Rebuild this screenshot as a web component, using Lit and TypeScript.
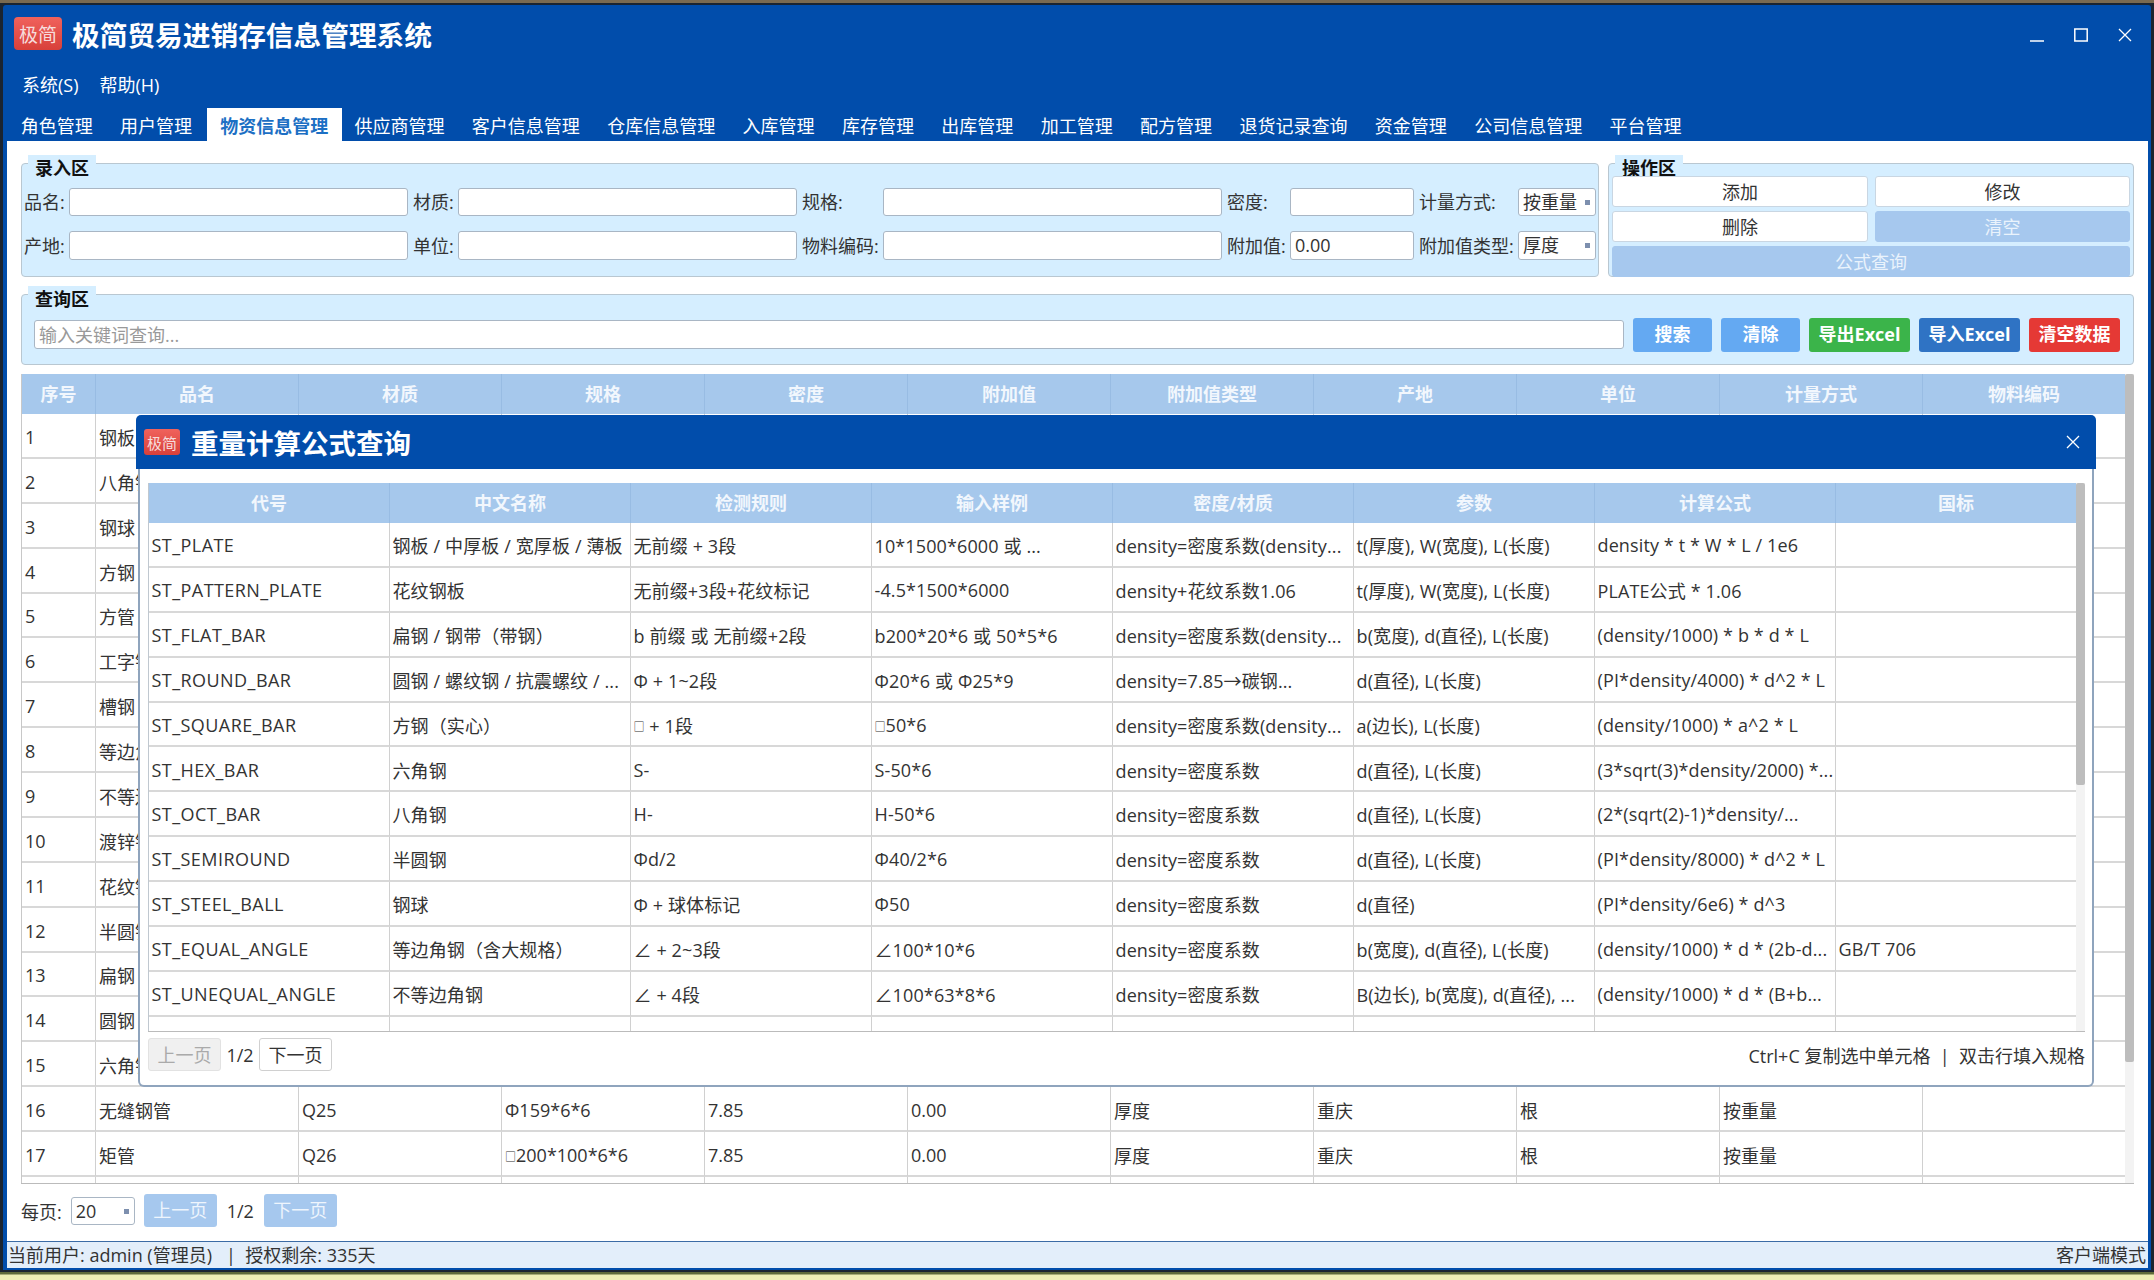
import { LitElement, html, css } from "lit";
import { customElement } from "lit/decorators.js";

const TABS = ["角色管理","用户管理","物资信息管理","供应商管理","客户信息管理","仓库信息管理","入库管理","库存管理","出库管理","加工管理","配方管理","退货记录查询","资金管理","公司信息管理","平台管理"];
const HEAD = ["序号","品名","材质","规格","密度","附加值","附加值类型","产地","单位","计量方式","物料编码"];
const NAMES = ["钢板","八角钢","钢球","方钢","方管","工字钢","槽钢","等边角钢","不等边角钢","渡锌钢管","花纹钢板","半圆钢","扁钢","圆钢","六角钢","无缝钢管","矩管"];
const RHEAD = ["代号","中文名称","检测规则","输入样例","密度/材质","参数","计算公式","国标"];
const D = "density=密度系数";
const RULES = [
["ST_PLATE","钢板 / 中厚板 / 宽厚板 / 薄板","无前缀 + 3段","10*1500*6000 或 ...","density=密度系数(density...","t(厚度), W(宽度), L(长度)","density * t * W * L / 1e6",""],
["ST_PATTERN_PLATE","花纹钢板","无前缀+3段+花纹标记","-4.5*1500*6000","density+花纹系数1.06","t(厚度), W(宽度), L(长度)","PLATE公式 * 1.06",""],
["ST_FLAT_BAR","扁钢 / 钢带（带钢）","b 前缀 或 无前缀+2段","b200*20*6 或 50*5*6","density=密度系数(density...","b(宽度), d(直径), L(长度)","(density/1000) * b * d * L",""],
["ST_ROUND_BAR","圆钢 / 螺纹钢 / 抗震螺纹 / ...","Φ + 1~2段","Φ20*6 或 Φ25*9","density=7.85→碳钢...","d(直径), L(长度)","(PI*density/4000) * d^2 * L",""],
["ST_SQUARE_BAR","方钢（实心）","□ + 1段","□50*6","density=密度系数(density...","a(边长), L(长度)","(density/1000) * a^2 * L",""],
["ST_HEX_BAR","六角钢","S-","S-50*6",D,"d(直径), L(长度)","(3*sqrt(3)*density/2000) *...",""],
["ST_OCT_BAR","八角钢","H-","H-50*6",D,"d(直径), L(长度)","(2*(sqrt(2)-1)*density/...",""],
["ST_SEMIROUND","半圆钢","Φd/2","Φ40/2*6",D,"d(直径), L(长度)","(PI*density/8000) * d^2 * L",""],
["ST_STEEL_BALL","钢球","Φ + 球体标记","Φ50",D,"d(直径)","(PI*density/6e6) * d^3",""],
["ST_EQUAL_ANGLE","等边角钢（含大规格）","∠ + 2~3段","∠100*10*6",D,"b(宽度), d(直径), L(长度)","(density/1000) * d * (2b-d...","GB/T 706"],
["ST_UNEQUAL_ANGLE","不等边角钢","∠ + 4段","∠100*63*8*6",D,"B(边长), b(宽度), d(直径), ...","(density/1000) * d * (B+b...",""],
["ST_ROUND_TUBE","无缝钢管 / 焊接钢管 / 圆管","Φ + 2段","Φ159*6*6",D,"D(外径), t(壁厚), L(长度)","(PI*density/1000) * t * (D-t) * L",""],
];

const FONT = css`"Open Sans", "Noto Sans CJK SC", sans-serif`;

@customElement("app-root")
export class AppRoot extends LitElement {
  static styles = css`
    :host { display: block; width: 2154px; height: 1280px; overflow: hidden; position: relative;
      font-family: ${FONT}; font-size: 18px; color: #333;
      background: linear-gradient(#7a6a50 0 3px, #1b2430 3px 1272px, #5f6a3a 1272px 1274px, #eeeeb4 1275px); }
    * { box-sizing: border-box; }
    .window { margin: 5px 3px 0; height: 1265px; background: #014dab; padding: 0 3px 2px 4px;
      display: flex; flex-direction: column; border-radius: 3px 3px 0 0; }
    .titlebar { height: 61px; display: flex; align-items: flex-start; color: #fff; }
    .logo { background: linear-gradient(#f0625c, #d8403a); border-radius: 4px; color: #f6dcdc;
      display: flex; align-items: center; justify-content: center; }
    .logo.big { width: 48px; height: 33px; font-size: 19px; margin: 12px 10px 0 7px; }
    .apptitle { font-size: 27.7px; font-weight: 700; line-height: 44px; margin-top: 8px; white-space: nowrap; }
    .controls { margin-left: auto; display: flex; gap: 30px; padding: 23px 16px 0 0; align-items: flex-start; }
    .controls svg { display: block; }
    .menu { height: 42px; display: flex; gap: 21px; padding: 2px 0 0 15px; color: #fff; line-height: 34px; }
    .tabs { height: 33px; display: flex; color: #fff; }
    .tab { padding: 0 13.7px; display: flex; align-items: center; white-space: nowrap; }
    .tab.on { background: #fff; color: #1c6fc4; font-weight: 700; width: 135px; justify-content: center; margin-left: 1px; margin-right: -1px; }
    .content { flex: 1; background: #fff; padding: 22px 14px 0; display: flex; flex-direction: column; }
    .toprow { display: flex; gap: 9px; height: 114px; }
    .group { position: relative; background: #d5eeff; border: 1px solid #b9c7d1; border-radius: 4px; }
    .legend { position: absolute; left: 6px; top: -9px; width: 68px; height: 27px; background: #d5eeff;
      font-weight: 700; color: #111; line-height: 26px; text-align: center; }
    .entry { width: 1578px; padding: 24px 0 0 2px; display: grid;
      grid-template-columns: 45px 344px 45px 344px 81px 344px 63px 129px 99px 78px;
      grid-template-rows: 28px 29px; row-gap: 15px; align-items: center; }
    .lab { white-space: nowrap; line-height: 28px; }
    .inp { height: 100%; width: calc(100% - 5px); background: #fff; border: 1px solid #a9b6c4; border-radius: 3px;
      padding: 0 4px; line-height: 27px; white-space: nowrap; }
    .sel { position: relative; width: 100%; }
    .sel i { position: absolute; right: 5px; top: 11px; width: 5px; height: 5px; background: #7d8fae; }
    .ops { flex: 1; padding: 12px 3px 0; display: grid; grid-template-columns: 256px 255px; column-gap: 7px;
      grid-template-rows: 31px 31px 31px; row-gap: 4px; }
    .ops .legend { z-index: 1; height: 21px; }
    .opb { background: #fff; border: 1px solid #c9d6e2; border-radius: 3px; text-align: center; line-height: 30px; position: relative; z-index: 2; }
    .opb.blue { background: #a6c8ee; border-color: #a6c8ee; color: #eaf3fc; }
    .wide { grid-column: 1 / 3; }
    .query { margin-top: 17px; height: 71px; padding: 23px 13px 0 12px; display: flex; gap: 9px; align-items: flex-start; }
    .query .inp { flex: 1; width: auto; height: 29px; margin-top: 2px; color: #999; line-height: 28px; }
    .qb { height: 34px; border-radius: 3px; color: #fff; font-weight: 700; text-align: center; line-height: 33px; white-space: nowrap; }
    .b1 { width: 79px; background: #64a9f2; }
    .b2 { width: 101px; background: #3bb44a; }
    .b3 { width: 101px; background: #2f73c4; }
    .b4 { width: 91px; background: #e53935; }
    .tablewrap { margin-top: 9px; height: 810px; display: flex; border-bottom: 1px solid #bbb; overflow: hidden; flex: none; }
    .tablebody { flex: 1; overflow: hidden; border-left: 1px solid #c8c8c8; }
    .tr { display: grid; }
    .main .tr { grid-template-columns: 74px repeat(10, 203px); }
    .rt .tr { grid-template-columns: repeat(8, 241px); }
    .th { height: 40px; background: #a6c8ec; color: #f2f7fd; font-weight: 700; text-align: center; line-height: 40px;
      border-right: 1px solid #98bce3; white-space: nowrap; }
    .td { height: 44.875px; padding: 3px 3px 0; display: flex; align-items: center; border-right: 1px solid #d0d0d0; border-bottom: 2px solid #d8d8d8;
      white-space: pre; overflow: hidden; background: #fff; }
    .rt .td { padding: 1.5px 2px 0 2.5px; letter-spacing: .12px; }
    .rt .td:first-child { letter-spacing: .45px; }
    .sq { font-size: 11px; margin-top: 3px; letter-spacing: 0; }
    .scroll { width: 9px; background: #f3f3f3; flex: none; }
    .scroll div { background: #bdbdbd; border-radius: 2px; }
    .pager { margin-top: 10px; display: flex; align-items: center; height: 33px; }
    .pg { width: 73px; height: 33px; border-radius: 3px; text-align: center; line-height: 32px; white-space: nowrap; }
    .pg.blue { background: #a6c8ee; color: #eef5fd; }
    .pg.off { background: #f0f0f0; color: #aaa; border: 1px solid #e2e2e2; }
    .pg.white { background: #fff; border: 1px solid #d0d0d0; }
    .psel { position: relative; width: 64px; height: 28px; margin: 0 9px 0 9px; background: #fff; border: 1px solid #a9b6c4; border-radius: 3px;
      padding: 0 4px; line-height: 27px; }
    .psel i { position: absolute; right: 5px; top: 11px; width: 5px; height: 5px; background: #7d8fae; }
    .frac { width: 47px; text-align: center; }
    .status { height: 27px; flex: none; background: #e3eefa; border-top: 1px solid #3b6ba5; display: flex; justify-content: space-between;
      padding: 0 2px 0 1px; line-height: 27px; white-space: pre; }
    .modal { position: absolute; left: 136px; top: 415px; width: 1960px; height: 672px; display: flex; flex-direction: column; }
    .mhead { height: 54px; flex: none; background: #014dab; border-radius: 5px 5px 0 0; display: flex; align-items: center; color: #fff; }
    .logo.small { width: 36px; height: 26px; font-size: 15px; margin: 0 11px 0 8px; border-radius: 3px; }
    .mtitle { font-size: 27.5px; font-weight: 700; white-space: nowrap; }
    .mclose { margin-left: auto; margin-right: 16px; }
    .mbody { flex: 1; margin: 0 2px; background: #fff; border: 2px solid #8fa4bd; border-top: 0; border-radius: 0 0 6px 6px;
      padding: 14px 7px 0 8px; display: flex; flex-direction: column; }
    .rt { height: 549px; margin-top: 0; border-bottom: 1px solid #bbb; }
    .rt .tablebody { border-left: 1px solid #c0c8d0; }
    .mfoot { display: flex; align-items: center; height: 33px; margin-top: 6px; white-space: nowrap; }
    .frac2 { width: 38px; text-align: center; }
    .hint { margin-left: auto; white-space: pre; }
  `;

  cell(c: string) {
    if (!c.includes("□")) return c;
    return html`<span class="sq">□</span>${c.replace("□", "")}`;
  }

  render() {
    const lab = (s: string) => html`<div class="lab">${s}</div>`;
    const inp = (v = "") => html`<div class="inp">${v}</div>`;
    const sel = (v: string) => html`<div class="inp sel">${v}<i></i></div>`;
    const blanks = (n: number) => Array.from({ length: n }, () => html`<div class="td"></div>`);
    return html`
      <div class="window">
        <div class="titlebar">
          <div class="logo big">极简</div>
          <div class="apptitle">极简贸易进销存信息管理系统</div>
          <div class="controls">
            <svg width="14" height="14" viewBox="0 0 14 14"><path d="M0 13h14" stroke="#fff" stroke-width="1.5"/></svg>
            <svg width="14" height="14" viewBox="0 0 14 14"><rect x=".8" y="1" width="12.4" height="12" fill="none" stroke="#fff" stroke-width="1.5"/></svg>
            <svg width="14" height="14" viewBox="0 0 14 14"><path d="M1 1l12 12M13 1L1 13" stroke="#fff" stroke-width="1.3"/></svg>
          </div>
        </div>
        <div class="menu"><span>系统(S)</span><span>帮助(H)</span></div>
        <div class="tabs">${TABS.map((t, i) => html`<div class="tab ${i === 2 ? "on" : ""}">${t}</div>`)}</div>
        <div class="content">
          <div class="toprow">
            <div class="group entry">
              <div class="legend">录入区</div>
              ${lab("品名:")}${inp()}${lab("材质:")}${inp()}${lab("规格:")}${inp()}${lab("密度:")}${inp()}${lab("计量方式:")}${sel("按重量")}
              ${lab("产地:")}${inp()}${lab("单位:")}${inp()}${lab("物料编码:")}${inp()}${lab("附加值:")}${inp("0.00")}${lab("附加值类型:")}${sel("厚度")}
            </div>
            <div class="group ops">
              <div class="legend">操作区</div>
              <div class="opb">添加</div><div class="opb">修改</div>
              <div class="opb">删除</div><div class="opb blue">清空</div>
              <div class="opb blue wide">公式查询</div>
            </div>
          </div>
          <div class="group query">
            <div class="legend">查询区</div>
            <div class="inp">输入关键词查询...</div>
            <div class="qb b1">搜索</div><div class="qb b1">清除</div>
            <div class="qb b2">导出Excel</div><div class="qb b3">导入Excel</div><div class="qb b4">清空数据</div>
          </div>
          <div class="tablewrap main">
            <div class="tablebody">
              <div class="tr">${HEAD.map((h) => html`<div class="th">${h}</div>`)}</div>
              ${NAMES.slice(0, 15).map((n, i) => html`<div class="tr">
                <div class="td">${i + 1}</div><div class="td">${n}</div>${blanks(9)}
              </div>`)}
              <div class="tr">
                <div class="td">16</div><div class="td">无缝钢管</div><div class="td">Q25</div><div class="td">Φ159*6*6</div>
                <div class="td">7.85</div><div class="td">0.00</div><div class="td">厚度</div><div class="td">重庆</div><div class="td">根</div><div class="td">按重量</div><div class="td"></div>
              </div>
              <div class="tr">
                <div class="td">17</div><div class="td">矩管</div><div class="td">Q26</div><div class="td">${this.cell("□200*100*6*6")}</div>
                <div class="td">7.85</div><div class="td">0.00</div><div class="td">厚度</div><div class="td">重庆</div><div class="td">根</div><div class="td">按重量</div><div class="td"></div>
              </div>
              <div class="tr">${blanks(11)}</div>
            </div>
            <div class="scroll"><div style="height: 688px"></div></div>
          </div>
          <div class="pager">
            <span>每页:</span>
            <div class="psel">20<i></i></div>
            <div class="pg blue">上一页</div><div class="frac">1/2</div><div class="pg blue">下一页</div>
          </div>
        </div>
        <div class="status"><span>当前用户: admin (管理员)   |  授权剩余: 335天</span><span>客户端模式</span></div>
      </div>
      <div class="modal">
        <div class="mhead">
          <div class="logo small">极简</div>
          <div class="mtitle">重量计算公式查询</div>
          <svg class="mclose" width="14" height="14" viewBox="0 0 14 14"><path d="M1 1l12 12M13 1L1 13" stroke="#fff" stroke-width="1.3"/></svg>
        </div>
        <div class="mbody">
          <div class="tablewrap rt">
            <div class="tablebody">
              <div class="tr">${RHEAD.map((h) => html`<div class="th">${h}</div>`)}</div>
              ${RULES.map((r) => html`<div class="tr">${r.map((c) => html`<div class="td">${this.cell(c)}</div>`)}</div>`)}
            </div>
            <div class="scroll"><div style="height: 302px"></div></div>
          </div>
          <div class="mfoot">
            <div class="pg off">上一页</div><div class="frac2">1/2</div><div class="pg white">下一页</div>
            <div class="hint">Ctrl+C 复制选中单元格  |  双击行填入规格</div>
          </div>
        </div>
      </div>
    `;
  }
}
